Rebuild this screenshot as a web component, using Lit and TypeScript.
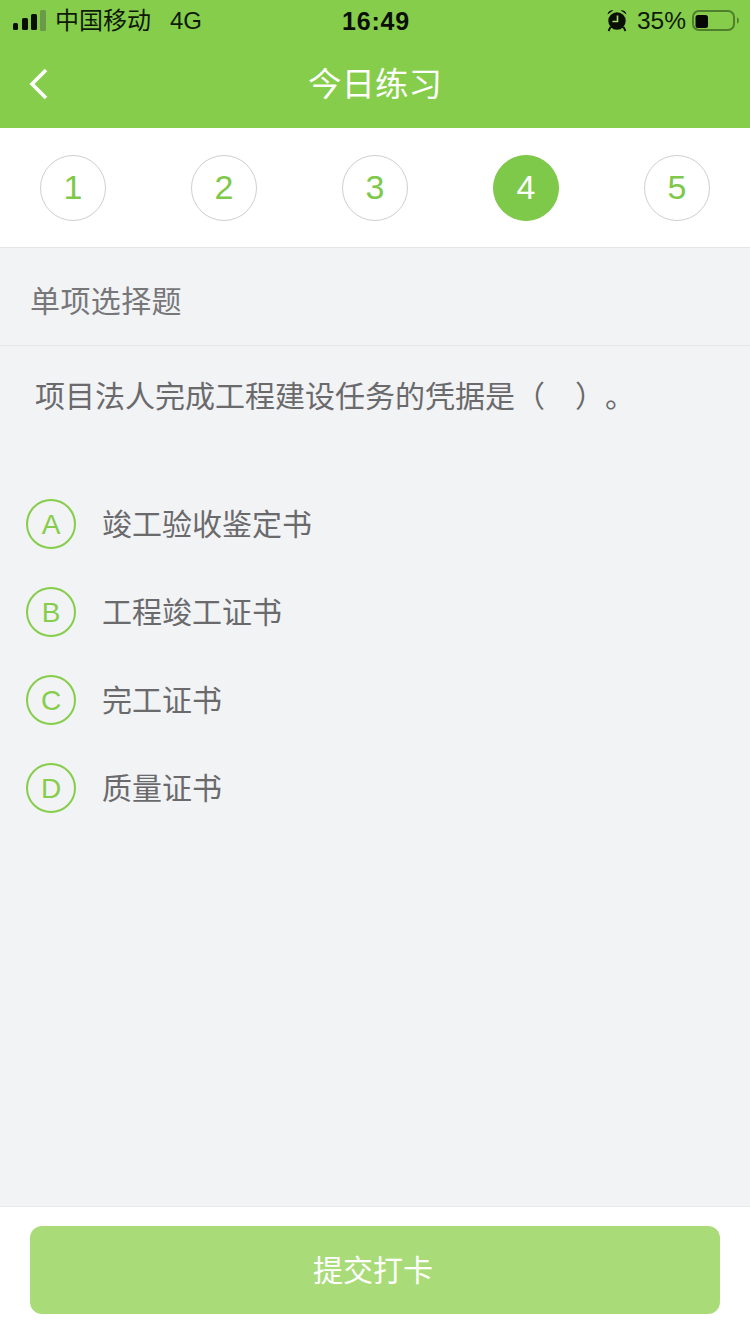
import { LitElement, html, css, svg } from "lit";
import { customElement } from "lit/decorators.js";

const STEPS = ["1", "2", "3", "4", "5"];
const OPTIONS = [
  ["A", "竣工验收鉴定书"],
  ["B", "工程竣工证书"],
  ["C", "完工证书"],
  ["D", "质量证书"],
];

@customElement("app-root")
export class AppRoot extends LitElement {
  static styles = css`
    :host {
      display: flex;
      flex-direction: column;
      width: 750px;
      height: 1334px;
      background: #f2f3f5;
      font-family: "Liberation Sans", "Noto Sans CJK SC", sans-serif;
      color: #6a6a6c;
      overflow: hidden;
      text-spacing-trim: space-all;
    }
    .header { background: #86cd4b; height: 128px; display: flex; flex-direction: column; }
    .status {
      height: 40px;
      box-sizing: border-box;
      display: grid;
      grid-template-columns: 1fr auto 1fr;
      align-items: center;
      padding: 1px 11px 0 13px;
      color: #0e1a08;
      font-size: 24px;
    }
    .status-left, .status-right { display: flex; align-items: center; }
    .status-right { justify-content: flex-end; }
    .carrier { margin-left: 9px; padding-bottom: 5px; }
    .net { margin-left: 19px; }
    .time { font-size: 25px; font-weight: 700; color: #0a0f05; letter-spacing: 0.8px; }
    .pct { font-size: 24.5px; margin: 0 6px 0 8px; }
    .nav { flex: 1; display: flex; align-items: center; justify-content: center; position: relative; padding-top: 2px; }
    .back { position: absolute; left: 28px; top: 27px; }
    .title { color: #fff; font-size: 33.5px; line-height: 40px; }
    .steps {
      height: 119px;
      background: #fff;
      border-bottom: 1px solid #e4e5e7;
      display: flex;
      align-items: center;
      justify-content: space-between;
      padding: 0 40px;
    }
    .step {
      width: 66px;
      height: 66px;
      box-sizing: border-box;
      border: 1px solid #cfcfcf;
      border-radius: 50%;
      display: flex;
      align-items: center;
      justify-content: center;
      color: #7ec84a;
      font-size: 34px;
    }
    .step.active { background: #7ec84a; border-color: #7ec84a; color: #fff; }
    .section {
      height: 98px;
      box-sizing: border-box;
      border-bottom: 1px solid #e6e7e9;
      padding: 4px 30px 0;
      display: flex;
      align-items: center;
      font-size: 30px;
      letter-spacing: 0.4px;
      color: #77777a;
    }
    .question { padding: 29px 35px 0; font-size: 30px; line-height: 44px; height: 121px; box-sizing: border-box; white-space: pre; }
    .options { flex: 1; padding: 32px 26px 0; display: flex; flex-direction: column; gap: 38px; }
    .option { display: flex; align-items: center; gap: 26px; height: 50px; font-size: 30px; }
    .option-text { padding-bottom: 4px; }
    .letter {
      width: 50px;
      height: 50px;
      box-sizing: border-box;
      border: 2px solid #86cd4b;
      border-radius: 50%;
      display: flex;
      align-items: center;
      justify-content: center;
      padding-top: 2px;
      color: #86cd4b;
      font-size: 28px;
    }
    .footer {
      height: 128px;
      box-sizing: border-box;
      background: #fff;
      border-top: 1px solid #e8e9eb;
      padding: 19px 30px 20px;
      display: flex;
    }
    .submit {
      flex: 1;
      height: 88px;
      box-sizing: border-box;
      padding: 0 4px 4px 0;
      background: #a9dc78;
      border-radius: 12px;
      color: #fff;
      font-size: 30px;
      display: flex;
      align-items: center;
      justify-content: center;
    }
  `;

  private signal() {
    return html`<svg width="33" height="22" viewBox="0 0 33 22">
      <rect x="0" y="13" width="5" height="7" rx="1.5" fill="#0a0f05"></rect>
      <rect x="9" y="8" width="6" height="12" rx="1.5" fill="#0a0f05"></rect>
      <rect x="18" y="4" width="6" height="16" rx="1.5" fill="#0a0f05"></rect>
      <rect x="27" y="0" width="6" height="21" rx="1.5" fill="#6a9a48"></rect>
    </svg>`;
  }

  private alarm() {
    return html`<svg width="22" height="23" viewBox="0 0 22 23">
      ${svg`<circle cx="10" cy="11" r="8.7" fill="#0a0f05"></circle>
      <path d="M0.5 4.5 A5 5 0 0 1 6.5 0.3 Z M19.5 4.5 A5 5 0 0 0 13.5 0.3 Z" fill="#0a0f05"></path>
      <path d="M3.5 17 L1.5 21 M16.5 17 L18.5 21" stroke="#0a0f05" stroke-width="1.8"></path>
      <path d="M10.5 5.5 V11.5 H5.5" fill="none" stroke="#a9dc78" stroke-width="1.6"></path>`}
    </svg>`;
  }

  private battery() {
    return html`<svg width="47" height="23" viewBox="0 0 47 23">
      <rect x="1" y="1" width="41" height="19" rx="6" fill="none" stroke="#4f7f2b" stroke-width="2"></rect>
      <rect x="3.5" y="5" width="12.5" height="13" rx="2.5" fill="#050805"></rect>
      <path d="M45 7.5 a1.8 3 0 0 1 0 6 Z" fill="#4f7f2b"></path>
    </svg>`;
  }

  render() {
    return html`
      <div class="header">
        <div class="status">
          <div class="status-left">
            ${this.signal()}
            <span class="carrier">中国移动</span>
            <span class="net">4G</span>
          </div>
          <div class="time">16:49</div>
          <div class="status-right">
            ${this.alarm()}
            <span class="pct">35%</span>
            ${this.battery()}
          </div>
        </div>
        <div class="nav">
          <svg class="back" width="22" height="34" viewBox="0 0 22 34">
            <path d="M18 3 L4 17 L18 31" fill="none" stroke="#fff" stroke-width="3.6"></path>
          </svg>
          <div class="title">今日练习</div>
        </div>
      </div>
      <div class="steps">
        ${STEPS.map((s) => html`<div class="step ${s === "4" ? "active" : ""}">${s}</div>`)}
      </div>
      <div class="section">单项选择题</div>
      <div class="question">项目法人完成工程建设任务的凭据是（　）。</div>
      <div class="options">
        ${OPTIONS.map(
          ([l, t]) => html`<div class="option"><div class="letter">${l}</div><div class="option-text">${t}</div></div>`
        )}
      </div>
      <div class="footer"><div class="submit">提交打卡</div></div>
    `;
  }
}
